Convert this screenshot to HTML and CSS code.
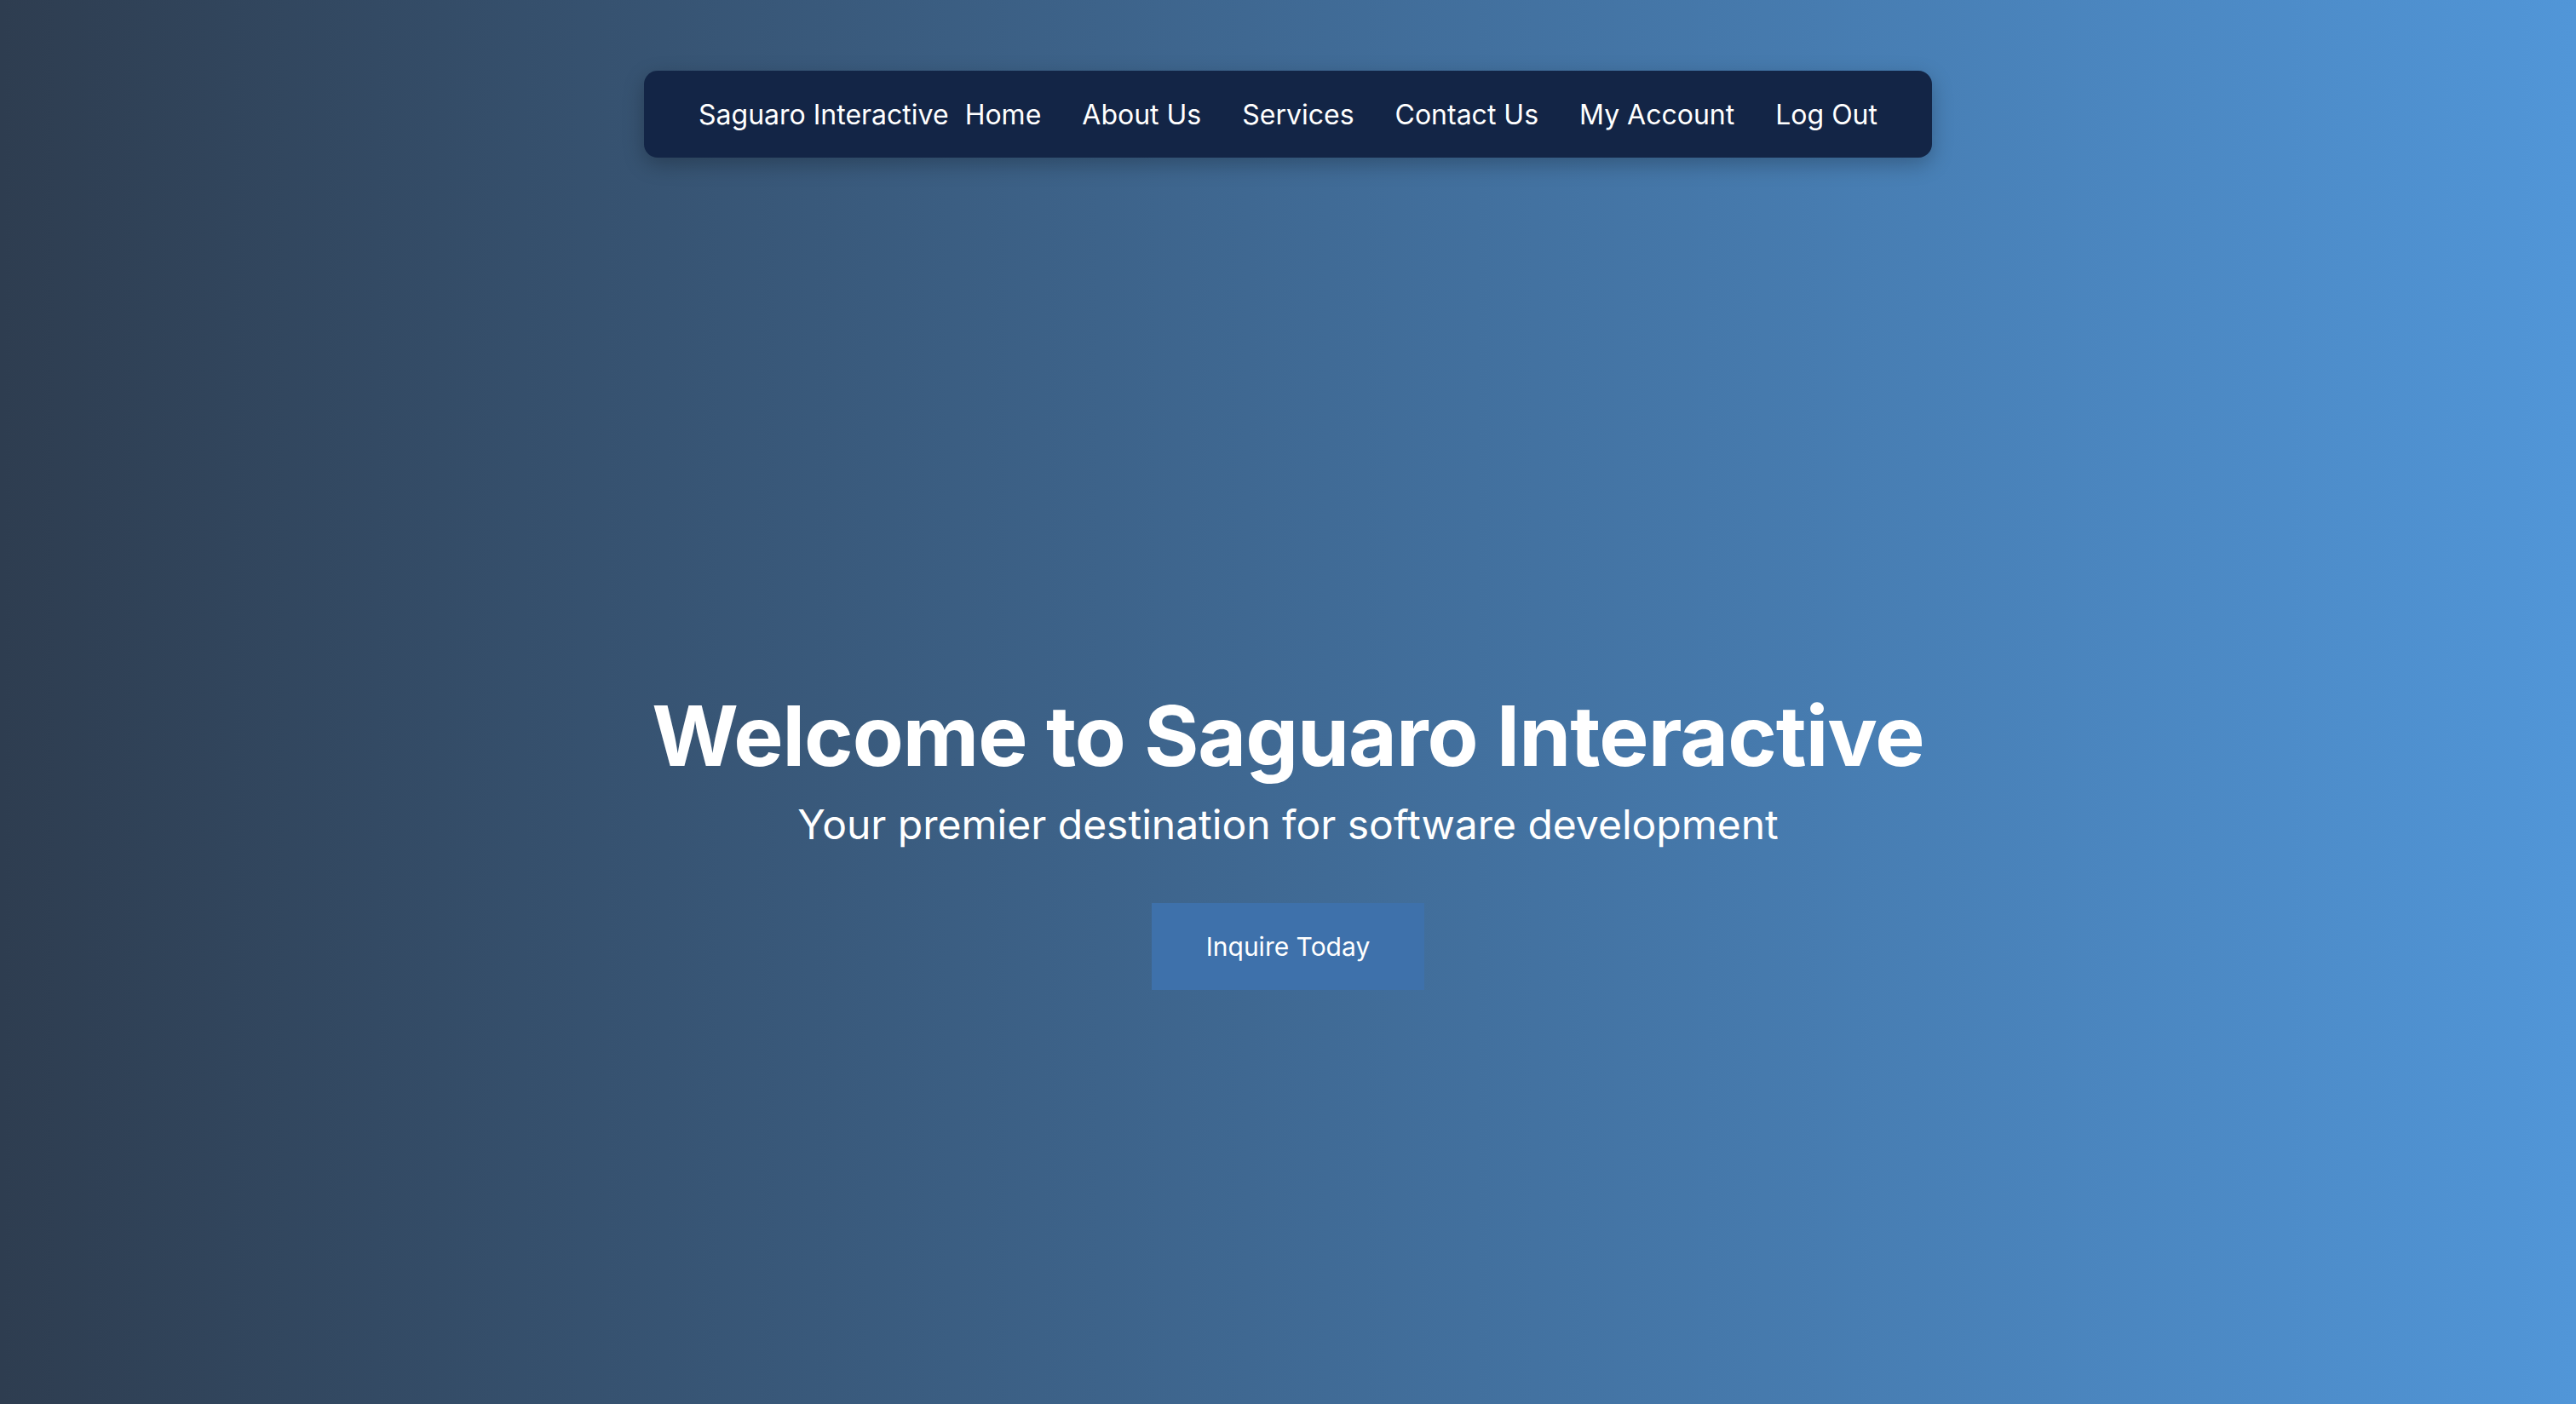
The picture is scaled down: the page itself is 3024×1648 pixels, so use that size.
FILE: index.html
```html
<!DOCTYPE html>
<html lang="en">
<head>
<meta charset="utf-8">
<title>Saguaro Interactive</title>
<link rel="stylesheet" href="styles.css">
</head>
<body>
<header class="topbar">
  <nav class="nav">
    <a class="brand" href="#">Saguaro Interactive</a>
    <ul class="links">
      <li><a href="#">Home</a></li>
      <li><a href="#">About Us</a></li>
      <li><a href="#">Services</a></li>
      <li><a href="#">Contact Us</a></li>
      <li><a href="#">My Account</a></li>
      <li><a href="#">Log Out</a></li>
    </ul>
  </nav>
</header>
<main class="hero">
  <h1 class="title">Welcome to Saguaro Interactive</h1>
  <p class="subtitle">Your premier destination for software development</p>
  <a class="cta" href="#">Inquire Today</a>
</main>
</body>
</html>
```
FILE: styles.css
```css
* { box-sizing: border-box; }
html, body { margin: 0; padding: 0; }
body {
  min-height: 100vh;
  font-family: Inter, "Noto Sans", "Liberation Sans", sans-serif;
  color: #ffffff;
  background: linear-gradient(to right, #2e3d50, #5196d8);
  display: flex;
  flex-direction: column;
}
.topbar {
  display: flex;
  justify-content: center;
  padding-top: 83px;
}
.nav {
  width: 1512px;
  height: 102px;
  padding: 0 64px;
  display: flex;
  align-items: center;
  justify-content: space-between;
  background: #132546;
  border-radius: 16px;
  box-shadow: 0 8px 24px rgba(0, 0, 0, 0.25);
}
.nav a {
  color: #ffffff;
  text-decoration: none;
  font-size: 32px;
}
.links {
  list-style: none;
  margin: 0;
  padding: 0;
  display: flex;
  gap: 48px;
}
.hero {
  flex: 1;
  display: flex;
  flex-direction: column;
  align-items: center;
  padding-top: 620px;
}
.title {
  margin: 0;
  font-size: 98px;
  font-weight: 700;
  line-height: 1.2;
  letter-spacing: -1px;
}
.subtitle {
  margin: 16px 0 0;
  font-size: 48px;
  line-height: 1.2;
}
.cta {
  margin-top: 64px;
  padding: 32px 64px;
  font-size: 30px;
  line-height: 38px;
  color: #ffffff;
  text-decoration: none;
  background: #3e71ab;
}
```
